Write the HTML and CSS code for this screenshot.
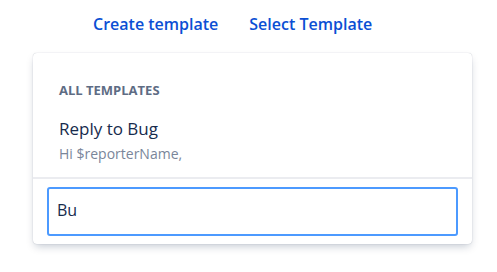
FILE: index.html
```html
<!DOCTYPE html>
<html>
<head>
<meta charset="utf-8">
<link rel="stylesheet" href="styles.css">
</head>
<body>
<div class="page">
  <nav class="actions">
    <a class="action" href="#">Create template</a>
    <a class="action" href="#">Select Template</a>
  </nav>
  <div class="menu">
    <div class="menu-list">
      <div class="group-heading">ALL TEMPLATES</div>
      <div class="option">
        <div class="option-title">Reply to Bug</div>
        <div class="option-desc">Hi $reporterName,</div>
      </div>
    </div>
    <div class="menu-search">
      <div class="search-input">Bu</div>
    </div>
  </div>
</div>
</body>
</html>
```

FILE: styles.css
```css
* { box-sizing: border-box; }
html, body { margin: 0; padding: 0; background: #ffffff; }
body {
  font-family: "Open Sans", "Noto Sans", "Liberation Sans", sans-serif;
  color: #172b4d;
}
.page {
  width: 497px;
  height: 272px;
  padding: 0 0 0 33px;
}
.actions {
  display: flex;
  gap: 31px;
  padding-left: 60px;
  height: 48px;
  align-items: center;
  margin-bottom: 5px;
}
.action {
  color: #0b4fd4;
  text-decoration: none;
  font-size: 16px;
  font-weight: 600;
  line-height: 24px;
}
.menu {
  width: 439px;
  height: 191px;
  border-radius: 4px;
  background: #fff;
  box-shadow: 0 4px 8px -2px rgba(9, 30, 66, 0.25), 0 0 1px rgba(9, 30, 66, 0.31);
  display: flex;
  flex-direction: column;
}
.menu-list {
  height: 126px;
  padding: 29px 26px 0 26px;
  border-bottom: 2px solid #ebecf0;
}
.group-heading {
  font-size: 13px;
  font-weight: 700;
  color: #5e6c84;
  line-height: 16px;
}
.option {
  margin-top: 20px;
}
.option-title {
  font-size: 17px;
  line-height: 22px;
  color: #172b4d;
}
.option-desc {
  margin-top: 5px;
  font-size: 14px;
  line-height: 18px;
  color: #7a869a;
}
.menu-search {
  padding: 8px 14px 8px 14px;
}
.search-input {
  height: 49px;
  border: 2px solid #4c9aff;
  border-radius: 3px;
  padding: 0 8px 3px 8px;
  display: flex;
  align-items: center;
  font-size: 16px;
  color: #172b4d;
}
```
